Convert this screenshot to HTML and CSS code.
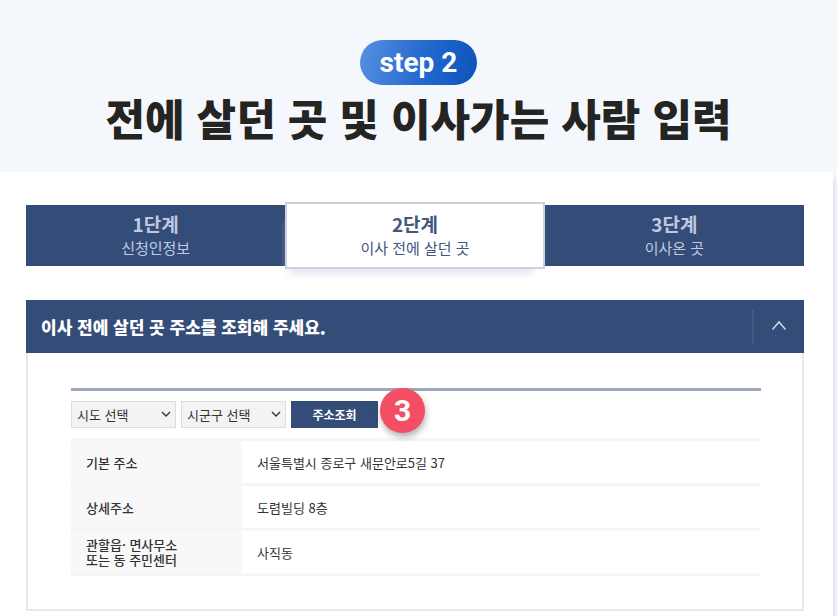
FILE: index.html
```html
<!DOCTYPE html>
<html lang="ko">
<head>
    <meta charset="UTF-8">
    <meta name="viewport" content="width=device-width, initial-scale=1.0">
    <title>전에 살던 곳 및 이사가는 사람 입력</title>
    <link rel="stylesheet" href="styles.css">
</head>
<body>
    <header class="page-header">
        <span class="step-label">step 2</span>
        <h1>전에 살던 곳 및 이사가는 사람 입력</h1>
    </header>

    <main class="content">
        <ol class="steps">
            <li class="step"><strong>1단계</strong><span>신청인정보</span></li>
            <li class="step active" aria-current="step"><strong>2단계</strong><span>이사 전에 살던 곳</span></li>
            <li class="step"><strong>3단계</strong><span>이사온 곳</span></li>
        </ol>

        <section class="panel">
            <div class="panel-head">
                <h2>이사 전에 살던 곳 주소를 조회해 주세요.</h2>
                <button type="button" class="toggle" aria-label="접기">
                    <svg width="16" height="12" viewBox="0 0 16 12" fill="none" stroke="currentColor" stroke-width="1.5">
                        <path d="M1.5 10.5 8 3 14.5 10.5"/>
                    </svg>
                </button>
            </div>
            <div class="panel-body">
                <form class="search">
                    <select aria-label="시도">
                        <option>시도 선택</option>
                    </select>
                    <select aria-label="시군구">
                        <option>시군구 선택</option>
                    </select>
                    <button type="button" class="search-btn">주소조회<span class="badge">3</span></button>
                </form>
                <table>
                    <tr>
                        <th scope="row">기본 주소</th>
                        <td>서울특별시 종로구 새문안로5길 37</td>
                    </tr>
                    <tr>
                        <th scope="row">상세주소</th>
                        <td>도렴빌딩 8층</td>
                    </tr>
                    <tr>
                        <th scope="row">관할읍· 면사무소<br>또는 동 주민센터</th>
                        <td>사직동</td>
                    </tr>
                </table>
            </div>
        </section>
    </main>
</body>
</html>
```

FILE: styles.css
```css
* {
    box-sizing: border-box;
}
body {
    margin: 0;
    background: #f4f8fd;
    color: #333;
    font-family: "Noto Sans CJK KR", sans-serif;
    font-size: 13px;
}
h1, h2 {
    margin: 0;
}
.page-header {
    display: flex;
    flex-direction: column;
    align-items: center;
    height: 172px;
    padding-top: 40px;
}
.step-label {
    padding: 0 20px;
    border-radius: 23px;
    background: linear-gradient(100deg, #5790e2, #2368cd 55%, #0c54bb);
    color: #fff;
    font-family: Roboto, sans-serif;
    font-size: 28px;
    font-weight: 700;
    line-height: 45px;
}
h1 {
    color: #242422;
    font-size: 43px;
    font-weight: 900;
    line-height: 64px;
    white-space: nowrap;
}
.content {
    margin-right: 4px;
    padding: 33px 29px 5px 26px;
    background: #fff;
    box-shadow: 2px 6px 5px #dde2ec;
}

/* steps */
.steps {
    display: grid;
    grid-template-columns: repeat(3, 1fr);
    margin: 0;
    padding: 0;
    list-style: none;
}
.step {
    display: flex;
    flex-direction: column;
    align-items: center;
    justify-content: center;
    height: 61px;
    background: #344c78;
    color: #bfcae0;
    font-size: 15px;
    line-height: 24px;
}
.step strong {
    font-size: 19px;
}
.step.active {
    z-index: 1;
    height: 67px;
    margin: -3px 0;
    border: 2px solid #cdd1d9;
    background: #fff;
    box-shadow: -4px 12px 8px -8px #dce3f0;
    color: #42587e;
}

/* address panel */
.panel {
    margin-top: 34px;
    border: 2px solid #e8e8ea;
    border-top: 0;
}
.panel-head {
    display: flex;
    align-items: center;
    justify-content: space-between;
    height: 53px;
    margin: 0 -2px;
    padding-left: 15px;
    background: #344c78;
    color: #fff;
}
h2 {
    font-size: 17px;
    font-weight: 900;
}
.toggle {
    width: 52px;
    height: 34px;
    padding: 0;
    border: 0;
    border-left: 2px solid #425982;
    background: none;
    color: #d2d9e6;
}
.panel-body {
    padding: 35px 41px 33px 43px;
}
.search {
    display: flex;
    gap: 5px;
    padding: 10px 0;
    border-top: 3px solid #9ca8bf;
}
select {
    width: 105px;
    height: 27px;
    padding: 0 5px;
    border: 1px solid #ddd;
    border-radius: 0;
    appearance: none;
    background: #f3f3f3 url("data:image/svg+xml,%3Csvg xmlns='http://www.w3.org/2000/svg' width='10' height='7' fill='none' stroke='%23333' stroke-width='1.4'%3E%3Cpath d='M1 1l4 4 4-4'/%3E%3C/svg%3E") no-repeat right 4px center;
    color: #333;
    font: inherit;
}
.search-btn {
    position: relative;
    width: 87px;
    height: 27px;
    padding: 0;
    border: 0;
    background: #344c78;
    color: #fff;
    font-family: inherit;
    font-size: 12px;
    font-weight: 700;
}
.badge {
    position: absolute;
    top: -13px;
    left: 89px;
    width: 45px;
    height: 45px;
    border-radius: 50%;
    background: #f34e63;
    box-shadow: 1px 4px 6px rgba(0, 0, 0, 0.3);
    font-family: Roboto, sans-serif;
    font-size: 30px;
    line-height: 45px;
}
table {
    width: 100%;
    border-collapse: collapse;
}
tr {
    height: 45px;
    border-top: 3px solid #f6f6f6;
    border-bottom: 3px solid #f6f6f6;
}
th, td {
    padding: 0 15px;
    line-height: 15px;
    text-align: left;
}
th {
    width: 171px;
    background: #f8f8f8;
    font-weight: 500;
}
```
